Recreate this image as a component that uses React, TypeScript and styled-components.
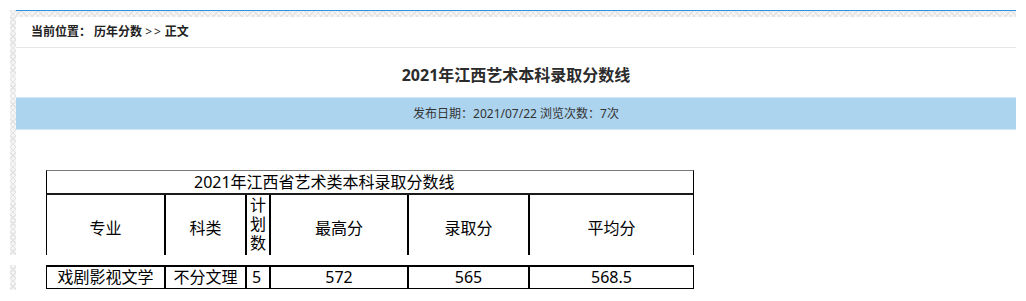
import React from "react";
import styled, { createGlobalStyle } from "styled-components";

const GlobalStyle = createGlobalStyle`
  html, body {
    margin: 0;
    padding: 0;
    background: #ffffff;
  }
  body {
    font-family: "Noto Sans", "Noto Sans CJK SC", sans-serif;
    color: #222;
  }
`;

const hatch = `
  background-color: #f5f5f5;
  background-image:
    repeating-linear-gradient(45deg, #e3e3e3 0 1px, transparent 1px 4px),
    repeating-linear-gradient(-45deg, #e3e3e3 0 1px, transparent 1px 4px);
`;

const Page = styled.div`
  padding-top: 10px;
  width: 1026px;
`;

const Slice = styled.div<{ $height: number }>`
  display: flex;
  margin-left: 10px;
  width: 1006px;
  height: ${(p) => p.$height}px;
  overflow: hidden;
`;

const Strip = styled.div`
  width: 6px;
  flex-shrink: 0;
  ${hatch}
`;

const Main = styled.div<{ $top?: boolean }>`
  flex: 1;
  display: flex;
  flex-direction: column;
  ${(p) => (p.$top ? `border-top: 1px solid #2b93e6; padding-top: 6px; ${hatch}` : "")}
`;

const Panel = styled.div`
  flex: 1;
  background: #ffffff;
  display: flex;
  flex-direction: column;
`;

const Gap = styled.div`
  height: 10px;
`;

const Crumb = styled.div`
  height: 30px;
  line-height: 30px;
  padding-left: 15px;
  font-size: 12px;
  font-weight: bold;
  color: #222;
  border-bottom: 1px solid #e6e6e6;
  white-space: pre;
`;

const Sep = styled.span`
  font-weight: normal;
  letter-spacing: 2px;
  margin: 0 2px 0 3px;
`;

const Title = styled.h1`
  margin: 0;
  height: 49px;
  box-sizing: border-box;
  padding-top: 15px;
  line-height: 24px;
  font-size: 16px;
  font-weight: bold;
  color: #2b2b2b;
  text-align: center;
`;

const InfoBand = styled.div`
  height: 31px;
  line-height: 31px;
  background: #acd4ee;
  border-top: 1px solid #d2e8f6;
  border-bottom: 1px solid #d2e8f6;
  font-size: 12px;
  color: #333;
  text-align: center;
`;

const Sheet = styled.div<{ $mt: number }>`
  margin-top: ${(p) => p.$mt}px;
  margin-left: 30px;
  width: 648px;
  color: #000;
  font-family: "Noto Sans", "Noto Sans CJK SC", sans-serif;
  font-size: 16px;
`;

const Caption = styled.div`
  height: 22px;
  line-height: 22px;
  border: 1px solid #000;
  border-top-color: #7a7a7a;
  border-bottom: 2px solid #1a1a1a;
  padding-left: 147px;
  white-space: nowrap;
`;

const Row = styled.div<{ $height: number; $top?: boolean; $bottom?: boolean }>`
  display: grid;
  grid-template-columns: 117px 81px 24px 138px 121px 165px;
  height: ${(p) => p.$height}px;
  border-left: 1px solid #000;
  border-right: 1px solid #000;
  ${(p) => (p.$top ? "border-top: 2px solid #000;" : "")}
  ${(p) => (p.$bottom ? "border-bottom: 1px solid #000;" : "")}
`;

const Cell = styled.div<{ $first?: boolean; $align?: "left" | "center" | "top" }>`
  display: flex;
  align-items: ${(p) => (p.$align === "top" ? "flex-start" : "center")};
  justify-content: ${(p) => (p.$align === "left" ? "flex-start" : "center")};
  padding-left: ${(p) => (p.$align === "left" ? "5px" : "0")};
  padding-top: ${(p) => (p.$align === "top" ? "1px" : "0")};
  text-align: center;
  line-height: 19px;
  white-space: ${(p) => (p.$align === "top" ? "normal" : "nowrap")};
  overflow-wrap: anywhere;
  ${(p) => (p.$first ? "" : "border-left: 2px solid #000;")}
`;

const head = ["专业", "科类", "计划数", "最高分", "录取分", "平均分"];
const data = ["戏剧影视文学", "不分文理", "5", "572", "565", "568.5"];

export default function App() {
  return (
    <Page>
      <GlobalStyle />
      <Slice $height={245}>
        <Strip />
        <Main $top>
          <Panel>
            <Crumb>
              当前位置： 历年分数<Sep>{">>"}</Sep>正文
            </Crumb>
            <Title>2021年江西艺术本科录取分数线</Title>
            <InfoBand>发布日期：2021/07/22 浏览次数：7次</InfoBand>
            <Sheet $mt={40}>
              <Caption>2021年江西省艺术类本科录取分数线</Caption>
              <Row $height={66}>
                {head.map((h, i) => (
                  <Cell key={h} $first={i === 0} $align={i === 2 ? "top" : "center"}>
                    {h}
                  </Cell>
                ))}
              </Row>
            </Sheet>
          </Panel>
        </Main>
      </Slice>
      <Gap />
      <Slice $height={25}>
        <Strip />
        <Main>
          <Panel>
            <Sheet $mt={0}>
              <Row $height={21} $top $bottom>
                {data.map((d, i) => (
                  <Cell key={d} $first={i === 0} $align={i === 2 ? "left" : "center"}>
                    {d}
                  </Cell>
                ))}
              </Row>
            </Sheet>
          </Panel>
        </Main>
      </Slice>
    </Page>
  );
}
